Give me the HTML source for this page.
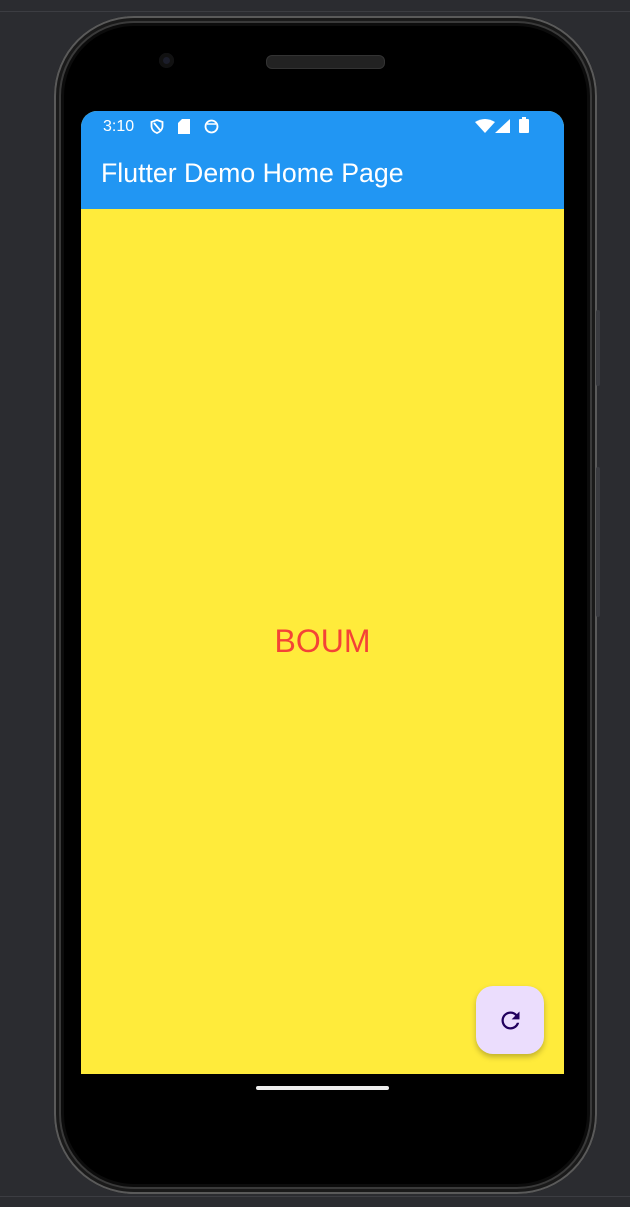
<!DOCTYPE html>
<html><head><style>
body{margin:0;width:630px;height:1207px;background:#2b2c30;position:relative;overflow:hidden;font-family:"Liberation Sans",Roboto,sans-serif}
.line{position:absolute;left:0;right:0;height:1px;background:#3c3d42}
.phone{position:absolute;left:54px;top:16px;width:543px;height:1178px;border-radius:80px;background:#000;box-shadow:inset 0 0 0 2px #5a5a5a,inset 0 0 0 5px #1a1a1a,inset 0 0 0 7px #3a3a3a,inset 0 0 0 10px #0c0c0c}
.btn{position:absolute;left:596px;width:4px;background:#3a3b40;border-radius:2px}
.screen{position:absolute;left:81px;top:111px;width:483px;height:963px;border-radius:16px 16px 0 0;overflow:hidden;background:#ffeb3b}
.bar{position:absolute;left:0;top:0;width:100%;height:98px;background:#2196f3;color:#fff}
.fab{position:absolute;left:395px;top:875px;width:68px;height:68px;border-radius:17px;background:#ebddfd;box-shadow:0 3px 6px rgba(0,0,0,.25);display:flex;align-items:center;justify-content:center}
</style></head><body>
<div class="line" style="top:11px"></div>
<div class="line" style="top:1196px"></div>
<div class="phone"></div>
<div class="btn" style="top:310px;height:76px"></div>
<div class="btn" style="top:467px;height:150px"></div>
<div style="position:absolute;left:159px;top:53px;width:15px;height:15px;border-radius:50%;background:#1b1d2a;box-shadow:inset 0 0 0 4px #111"></div>
<div style="position:absolute;left:266px;top:55px;width:117px;height:12px;border-radius:6px;background:#222;border:1px solid #333"></div>
<div class="screen">
 <div class="bar">
  <div style="position:absolute;left:22px;top:7px;font-size:16px">3:10</div>
  <svg style="position:absolute;left:69px;top:8px" width="14" height="15" viewBox="0 0 14 15"><path d="M7 1L1.5 3v4c0 3.5 2.5 6 5.5 7 3-1 5.5-3.5 5.5-7V3z M4 4l6 7" fill="none" stroke="#fff" stroke-width="1.8"/></svg>
  <svg style="position:absolute;left:97px;top:8px" width="12" height="15" viewBox="0 0 12 15"><path d="M4 0h8v15H0V4z" fill="#fff"/></svg>
  <svg style="position:absolute;left:123px;top:8px" width="15" height="15" viewBox="0 0 15 15"><circle cx="7.5" cy="7.5" r="6" fill="none" stroke="#fff" stroke-width="1.8"/><path d="M3 5h9" stroke="#fff" stroke-width="1.5"/></svg>
  <svg style="position:absolute;left:394px;top:8px" width="20" height="14" viewBox="0 0 20 14"><path d="M0 3Q10-3 20 3L10 14z" fill="#fff"/></svg>
  <svg style="position:absolute;left:414px;top:8px" width="15" height="14" viewBox="0 0 15 14"><path d="M15 0V14H0z" fill="#fff"/></svg>
  <div style="position:absolute;left:438px;top:8px;width:10px;height:14px;background:#fff;border-radius:1px"></div>
  <div style="position:absolute;width:4px;height:3px;background:#fff;left:441px;top:6px"></div>
  <div style="position:absolute;left:20px;top:47px;font-size:26.7px">Flutter Demo Home Page</div>
 </div>
 <div style="position:absolute;left:0;width:100%;top:512px;text-align:center;color:#f44336;font-size:32px">BOUM</div>
 <div class="fab"><svg width="27" height="27" viewBox="0 0 24 24"><path d="M17.65 6.35A7.958 7.958 0 0 0 12 4c-4.42 0-7.99 3.58-7.99 8s3.57 8 7.99 8c3.730 0 6.84-2.55 7.73-6h-2.08A5.99 5.99 0 0 1 12 18c-3.31 0-6-2.690-6-6s2.69-6 6-6c1.66 0 3.14.69 4.22 1.78L13 11h7V4l-2.35 2.35z" fill="#21005d"/></svg></div>
</div>
<div style="position:absolute;left:256px;top:1086px;width:133px;height:4px;border-radius:2px;background:#eee"></div>
</body></html>
